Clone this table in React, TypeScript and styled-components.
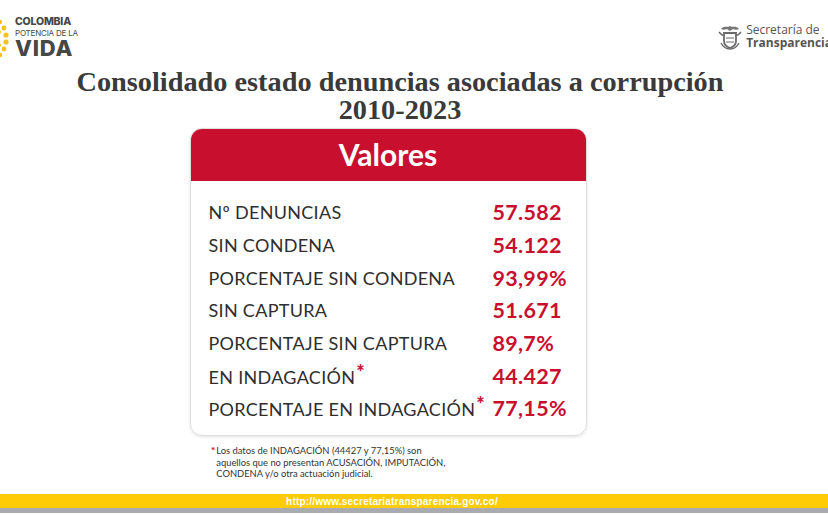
import React from "react";
import styled, { createGlobalStyle } from "styled-components";

const GlobalStyle = createGlobalStyle`
  html, body {
    margin: 0;
    padding: 0;
    background: #ffffff;
  }
  #root {
    width: 828px;
    height: 518px;
  }
`;

const Page = styled.div`
  width: 828px;
  height: 518px;
  display: flex;
  flex-direction: column;
  overflow: hidden;
  font-family: "Lato", "Open Sans", sans-serif;
`;

const TopBar = styled.div`
  height: 68px;
  display: flex;
  justify-content: space-between;
  align-items: flex-start;
`;

const ColombiaLogo = styled.div`
  display: flex;
  align-items: center;
  gap: 6px;
  padding-top: 16px;
`;

const LogoText = styled.div`
  display: flex;
  flex-direction: column;
  color: #474747;
  font-family: "Inter", "Liberation Sans", sans-serif;
`;

const LogoSmall = styled.span<{ $bold?: boolean }>`
  font-size: ${(p) => (p.$bold ? "10.5px" : "8px")};
  font-weight: ${(p) => (p.$bold ? 800 : 400)};
  line-height: ${(p) => (p.$bold ? "12px" : "11px")};
  letter-spacing: -0.2px;
`;

const LogoBig = styled.span`
  font-size: 22px;
  font-weight: 800;
  line-height: 24px;
  margin-top: -3px;
  letter-spacing: 0.8px;
`;

const SecretariaLogo = styled.div`
  display: flex;
  align-items: center;
  gap: 4px;
  padding-top: 23px;
  margin-right: -4px;
`;

const SecretariaText = styled.div`
  display: flex;
  flex-direction: column;
  color: #555;
  font-family: "Open Sans", "Liberation Sans", sans-serif;
  font-size: 12px;
  line-height: 14px;
`;

const Strong = styled.span`
  font-weight: 700;
  margin-top: -1px;
`;

const Body = styled.div`
  display: flex;
  flex-direction: column;
  align-items: center;
  padding-right: 28px;
`;

const Title = styled.h1`
  margin: 0;
  text-align: center;
  font-family: "Liberation Serif", "DejaVu Serif", serif;
  font-weight: 700;
  font-size: 28.3px;
  line-height: 28px;
  color: #3a3a3a;
`;

const Card = styled.div`
  margin-top: 4px;
  margin-right: 24px;
  width: 397px;
  height: 308px;
  border: 1px solid #dedede;
  border-radius: 12px;
  box-shadow: 0 1px 3px rgba(0, 0, 0, 0.12);
  box-sizing: border-box;
  overflow: hidden;
  display: flex;
  flex-direction: column;
`;

const CardHeader = styled.div`
  height: 52px;
  flex-shrink: 0;
  background: #c8102e;
  color: #ffffff;
  display: flex;
  align-items: center;
  justify-content: center;
  font-family: "Lato", sans-serif;
  font-weight: 700;
  font-size: 30px;
  padding-bottom: 2px;
  box-sizing: border-box;
`;

const Rows = styled.div`
  padding: 15px 0 0 18px;
  display: flex;
  flex-direction: column;
`;

const Row = styled.div`
  display: grid;
  grid-template-columns: 284px auto;
  height: 32.7px;
  align-items: center;
`;

const Label = styled.span`
  font-size: 18px;
  color: #2e2e2e;
  letter-spacing: 0.3px;
`;

const Value = styled.span`
  font-size: 21.5px;
  font-weight: 700;
  color: #c8102e;
  letter-spacing: 0.3px;
`;

const Star = styled.span`
  color: #c8102e;
  font-weight: 900;
  font-size: 20px;
  position: relative;
  top: -4px;
  margin-left: 1px;
`;

const Note = styled.div`
  width: 380px;
  margin-top: 9px;
  margin-right: 24px;
  padding-left: 13px;
  box-sizing: border-box;
  display: flex;
  gap: 1px;
  font-size: 9.4px;
  line-height: 11.6px;
  color: #333;
`;

const NoteStar = styled.span`
  color: #c8102e;
  font-weight: 900;
  font-size: 10px;
  line-height: 10px;
`;

const Footer = styled.div`
  margin-top: auto;
  margin-bottom: 5px;
  display: flex;
  flex-direction: column;
`;

const YellowBar = styled.div`
  height: 14px;
  background: #ffcb05;
  display: flex;
  align-items: center;
  justify-content: center;
`;

const Url = styled.span`
  color: #ffffff;
  font-family: "Liberation Sans", sans-serif;
  font-weight: 700;
  font-size: 10px;
  padding-right: 44px;
  letter-spacing: 0.2px;
`;

const GreyBar = styled.div`
  height: 5px;
  background: #aaabb0;
`;

const rows: { label: string; value: string; star?: boolean }[] = [
  { label: "Nº DENUNCIAS", value: "57.582" },
  { label: "SIN CONDENA", value: "54.122" },
  { label: "PORCENTAJE SIN CONDENA", value: "93,99%" },
  { label: "SIN CAPTURA", value: "51.671" },
  { label: "PORCENTAJE SIN CAPTURA", value: "89,7%" },
  { label: "EN INDAGACIÓN", value: "44.427", star: true },
  { label: "PORCENTAJE EN INDAGACIÓN", value: "77,15%", star: true },
];

const SunDots = () => {
  const dots = [
    { x: 0, y: 6, r: 2.2 },
    { x: 4, y: 12, r: 2.4 },
    { x: 6, y: 19, r: 2.6 },
    { x: 6, y: 26, r: 2.6 },
    { x: 4, y: 33, r: 2.4 },
    { x: 0, y: 39, r: 2.2 },
    { x: -1, y: 16, r: 2 },
    { x: -1, y: 29, r: 2 },
  ];
  return (
    <svg width="9" height="44" viewBox="0 0 9 44">
      {dots.map((d, i) => (
        <circle key={i} cx={d.x} cy={d.y} r={d.r} fill="#f6c21a" />
      ))}
    </svg>
  );
};

const Crest = () => (
  <svg width="24" height="27" viewBox="0 0 24 27" fill="none" stroke="#6b6b6b">
    <path d="M3 6 C6 2 9 5 12 3 C15 5 18 2 21 6 C19 7 17 7 15 6 L12 8 L9 6 C7 7 5 7 3 6 Z" fill="#777" stroke="none" />
    <path d="M1 9 C3 11 4 13 6 12 M23 9 C21 11 20 13 18 12" strokeWidth="1.6" />
    <path d="M6 10 H18 V18 C18 22 15 24 12 25 C9 24 6 22 6 18 Z" strokeWidth="1.8" />
    <path d="M8 15 H16 M8 19 H16" strokeWidth="1.2" />
    <path d="M3 20 C5 24 8 26 12 26 C16 26 19 24 21 20" strokeWidth="1.4" />
  </svg>
);

export default function App() {
  return (
    <>
      <GlobalStyle />
      <Page>
        <TopBar>
          <ColombiaLogo>
            <SunDots />
            <LogoText>
              <LogoSmall $bold>COLOMBIA</LogoSmall>
              <LogoSmall>POTENCIA DE LA</LogoSmall>
              <LogoBig>VIDA</LogoBig>
            </LogoText>
          </ColombiaLogo>
          <SecretariaLogo>
            <Crest />
            <SecretariaText>
              <span>Secretaría de</span>
              <Strong>Transparencia</Strong>
            </SecretariaText>
          </SecretariaLogo>
        </TopBar>
        <Body>
          <Title>
            Consolidado estado denuncias asociadas a corrupción
            <br />
            2010-2023
          </Title>
          <Card>
            <CardHeader>Valores</CardHeader>
            <Rows>
              {rows.map((r) => (
                <Row key={r.label}>
                  <Label>
                    {r.label}
                    {r.star && <Star>*</Star>}
                  </Label>
                  <Value>{r.value}</Value>
                </Row>
              ))}
            </Rows>
          </Card>
          <Note>
            <NoteStar>*</NoteStar>
            <span>
              Los datos de INDAGACIÓN (44427 y 77,15%) son
              <br />
              aquellos que no presentan ACUSACIÓN, IMPUTACIÓN,
              <br />
              CONDENA y/o otra actuación judicial.
            </span>
          </Note>
        </Body>
        <Footer>
          <YellowBar>
            <Url>http://www.secretariatransparencia.gov.co/</Url>
          </YellowBar>
          <GreyBar />
        </Footer>
      </Page>
    </>
  );
}
